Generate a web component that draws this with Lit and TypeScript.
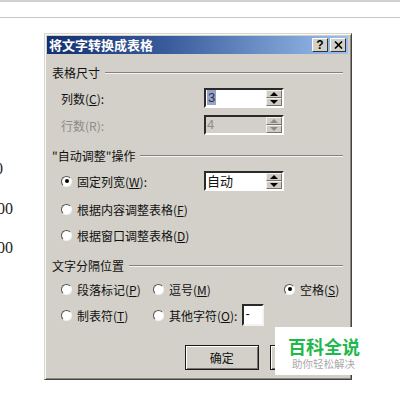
import { LitElement, html, css } from "lit";
import { customElement } from "lit/decorators.js";

@customElement("app-root")
export class AppRoot extends LitElement {
  static styles = css`
    :host { display: block; width: 400px; height: 400px; position: relative; overflow: hidden; background: #fff;
      font-family: "Noto Sans CJK SC", "Liberation Sans", sans-serif; font-size: 12px; color: #111; }
    .page { display: flex; flex-direction: column; height: 400px; }
    .toprule { height: 17px; border-top: 2px solid #d0d0d0; border-bottom: 1px solid #c8c8c8; box-sizing: content-box; flex: none; height: 15px; }
    .doc { display: flex; flex-direction: column; font: 16px/20px "Liberation Serif", serif; color: #222; padding-top: 141px; gap: 19.5px; }
    .d1 { margin-left: -5px; } .d2 { margin-left: -3px; }

    .dialog { position: absolute; left: 44px; top: 33px; width: 308px; height: 347px; box-sizing: border-box;
      background: #d3d0c9; border: 1px solid; border-color: #d8d6cf #45433f #45433f #d8d6cf;
      box-shadow: inset 1px 1px 0 #fbfaf6, inset -1px -1px 0 #8a8780; padding: 2px 3px 0 2px; display: flex; flex-direction: column; }
    .title { height: 18px; flex: none; display: flex; align-items: center; gap: 2px; padding: 0 2px 0 2px;
      background: linear-gradient(90deg, #13306f 0%, #3a5c9c 40%, #9cc0ee 100%); }
    .title b { flex: 1; color: #fff; font-size: 13px; line-height: 18px; font-weight: 700; }
    .tbtn { width: 16px; height: 14px; box-sizing: border-box; background: #d3d0c9; border: 1px solid; border-color: #fff #333 #333 #fff;
      display: flex; align-items: center; justify-content: center; font: 700 12px/12px "Liberation Sans", sans-serif; color: #000; }
    .tbtn svg { display: block; }

    .body { display: flex; flex-direction: column; padding: 8px 5px 0 5px; }
    .row { height: 20px; display: flex; align-items: center; flex: none; white-space: nowrap; }
    .head { gap: 5px; }
    .head i { flex: 1; height: 1px; background: #85827b; box-shadow: 0 1px 0 #f4f3ef; }
    .m4 { margin-top: 4px; } .m6 { margin-top: 6px; } .m7 { margin-top: 7px; } .m8 { margin-top: 8px; } .m10 { margin-top: 10px; }
    .ind { padding-left: 9px; }
    .lab { width: 143px; flex: none; }
    .dis { color: #8d8b85; }
    u { text-decoration: underline; }

    .spin { width: 80px; height: 20px; box-sizing: border-box; border: 2px solid; border-color: #2a2a2a #fff #fff #2a2a2a;
      background: #fff; display: flex; align-items: center; position: relative; padding-left: 1px; font: 13px/16px "Liberation Sans", "Noto Sans CJK SC", sans-serif; }
    .spin.off { background: #d3d0c9; color: #8d8b85; }
    .spin span { flex: 1; }
    .sel { background: #98a3c6; color: #23304f; flex: none !important; padding: 0 1px; }
    .arrows { width: 16px; height: 16px; display: flex; flex-direction: column; flex: none; margin-right: 0; }
    .arrows div { flex: 1; background: #cfccc5; border: 1px solid; border-color: #f2f1ec #77746d #77746d #f2f1ec; box-sizing: border-box;
      display: flex; align-items: center; justify-content: center; }
    .up { width: 0; height: 0; border: 4px solid transparent; border-top: 0; border-bottom: 4px solid #000; }
    .dn { width: 0; height: 0; border: 4px solid transparent; border-bottom: 0; border-top: 4px solid #000; }
    .off .up { border-bottom-color: #8d8b85; } .off .dn { border-top-color: #8d8b85; }
    .text1 { font-family: "Noto Sans CJK SC", sans-serif; font-size: 13px; }

    .radio { width: 11px; height: 11px; border-radius: 50%; flex: none; background: #fff; margin-right: 5px; box-sizing: border-box;
      border: 1px solid; border-color: #55534e #f4f3ef #f4f3ef #55534e; display: flex; align-items: center; justify-content: center; transform: rotate(0deg); }
    .radio.on::after { content: ""; width: 4px; height: 4px; background: #000; border-radius: 50%; }
    .opt { display: flex; align-items: center; }
    .c1 { width: 92px; flex: none; }
    .c2 { width: 131px; flex: none; }
    .other { width: 16px; flex: none; }
    .mini { width: 22px; height: 22px; box-sizing: border-box; border: 2px solid; border-color: #2a2a2a #f4f3ef #f4f3ef #2a2a2a; background: #fff;
      padding-left: 1px; font: 13px/16px "Liberation Sans", sans-serif; margin-left: 5px; }
    .btns { display: flex; gap: 11px; margin-top: 20px; padding-left: 133px; }
    .btn { width: 74px; height: 25px; box-sizing: border-box; border: 1px solid #1a1a1a; box-shadow: inset 1px 1px 0 #fff, inset -1px -1px 0 #77746d;
      display: flex; align-items: center; justify-content: center; background: #d3d0c9; }

    .mark { position: absolute; left: 275px; top: 327px; width: 100px; height: 48px; background: #fff; box-sizing: border-box; padding: 8px 0 0 13px; }
    .mark b { display: block; font-size: 18px; line-height: 22px; font-weight: 700; color: #1fb84c; white-space: nowrap; }
    .mark small { display: block; font-size: 10.5px; line-height: 13px; color: #a9a9a9; padding-left: 4px; white-space: nowrap; }
  `;

  private radio(label: unknown, on = false) {
    return html`<div class="opt"><span class="radio ${on ? "on" : ""}"></span><span>${label}</span></div>`;
  }

  private spin(content: unknown, off = false) {
    return html`<div class="spin ${off ? "off" : ""}">${content}<div class="arrows"><div><em class="up"></em></div><div><em class="dn"></em></div></div></div>`;
  }

  render() {
    return html`
      <div class="page">
        <div class="toprule"></div>
        <div class="doc">
          <div class="d1">0</div>
          <div class="d2">00</div>
          <div class="d2">00</div>
        </div>
      </div>
      <div class="dialog">
        <div class="title">
          <b>将文字转换成表格</b>
          <div class="tbtn">?</div>
          <div class="tbtn"><svg width="9" height="8" viewBox="0 0 9 8"><path d="M1 0.5 8 7.5M8 0.5 1 7.5" stroke="#000" stroke-width="1.6" fill="none"/></svg></div>
        </div>
        <div class="body">
          <div class="row head"><span>表格尺寸</span><i></i></div>
          <div class="row ind m6"><span class="lab">列数(<u>C</u>):</span>${this.spin(html`<span><span class="sel">3</span></span>`)}</div>
          <div class="row ind m7"><span class="lab dis">行数(R):</span>${this.spin(html`<span>4</span>`, true)}</div>
          <div class="row head m10"><span>"自动调整"操作</span><i></i></div>
          <div class="row ind m6"><div class="lab">${this.radio(html`固定列宽(<u>W</u>):`, true)}</div>${this.spin(html`<span class="text1">自动</span>`)}</div>
          <div class="row ind m8">${this.radio(html`根据内容调整表格(<u>F</u>)`)}</div>
          <div class="row ind m6">${this.radio(html`根据窗口调整表格(<u>D</u>)`)}</div>
          <div class="row head m10"><span>文字分隔位置</span><i></i></div>
          <div class="row ind m4">
            <div class="c1">${this.radio(html`段落标记(<u>P</u>)`)}</div>
            <div class="c2">${this.radio(html`逗号(<u>M</u>)`)}</div>
            ${this.radio(html`空格(<u>S</u>)`, true)}
          </div>
          <div class="row ind m6">
            <div class="c1">${this.radio(html`制表符(<u>T</u>)`)}</div>
            ${this.radio(html`其他字符(<u>O</u>):`)}
            <div class="mini">-</div>
          </div>
          <div class="btns">
            <div class="btn">确定</div>
            <div class="btn">取消</div>
          </div>
        </div>
      </div>
      <div class="mark"><b>百科全说</b><small>助你轻松解决</small></div>
    `;
  }
}
